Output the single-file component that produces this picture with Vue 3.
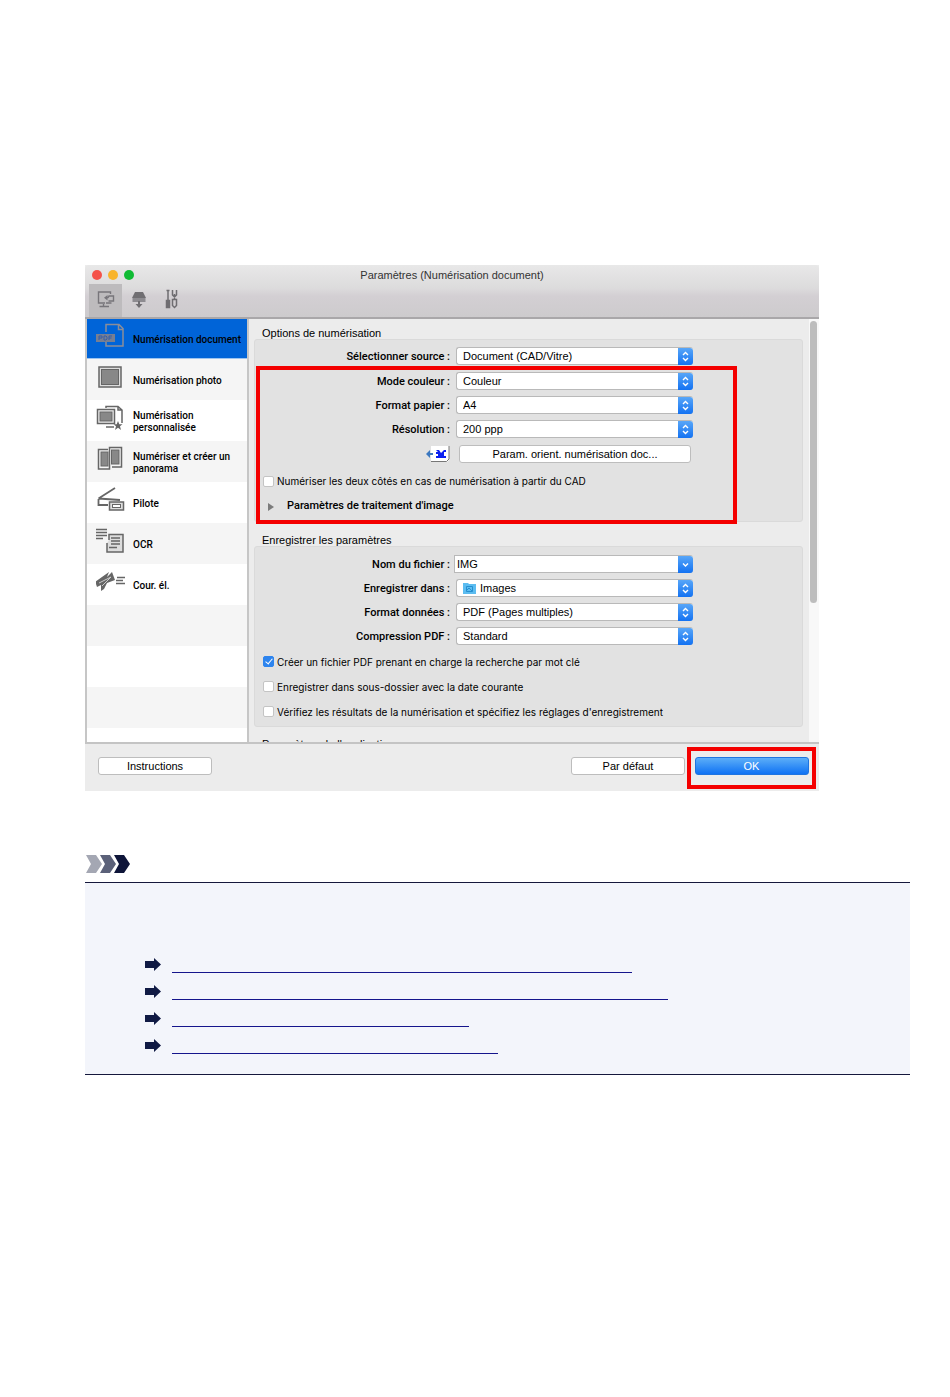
<template>
  <main class="page">
    <section class="window">
      <header class="titlebar">
        <div class="caption">
          <div class="lights"><i class="red"></i><i class="amber"></i><i class="green"></i></div>
          <h1>Paramètres (Numérisation document)</h1>
          <div class="lights-space"></div>
        </div>
        <nav class="toolbar">
          <button class="tool active" aria-label="Numériser depuis un ordinateur">
            <svg width="20" height="20" viewBox="0 0 20 20" fill="none" stroke="#77757a" stroke-width="1.4">
              <path d="M9 14H2.500V3H14.500V5M3.500 17.500H13M7.500 15V17" />
              <path d="M10 14H15.500M10 8.500H12L13 7H17.500V12H12.500" />
              <path d="M11.500 6L8 8.700L11.500 11.500Z" fill="#77757a" stroke="none" />
            </svg>
          </button>
          <button class="tool" aria-label="Numériser depuis le panneau">
            <svg width="20" height="20" viewBox="0 0 20 20" fill="#706e72">
              <path d="M6 3H14L17 9H3Z" />
              <path d="M3.500 9H16.500V13H3.500Z" fill="#8d8b90" />
              <path d="M9 12H11V15H13.500L10 19L6.500 15H9Z" />
            </svg>
          </button>
          <button class="tool" aria-label="Paramètres généraux">
            <svg width="20" height="20" viewBox="0 0 20 20" fill="none" stroke="#6f6d71" stroke-width="1.5">
              <path d="M6 1V11M4.500 1.500H7.500" />
              <rect x="4.500" y="11.500" width="3" height="7" fill="#6f6d71" />
              <path d="M10.500 1V6L12.500 8L14.500 6V1M12.500 5V10" />
              <path d="M10.500 10.500H14.500V16.500L12.500 18.500L10.500 16.500Z" />
            </svg>
          </button>
        </nav>
      </header>

      <div class="body">
        <ul class="sidebar">
          <li v-for="item in menu" :key="item.label" :class="{ selected: item.icon === 'doc' }">
            <button class="item">
              <svg width="32" height="28" viewBox="0 0 32 28" fill="none" stroke="#666" stroke-width="1.5">
                <g v-if="item.icon === 'doc'" stroke="#8b8d98">
                  <path d="M10 10V2.500H23L27 6.500V24H10V20M22.500 3V7.500H27" />
                  <rect x="0" y="12" width="19" height="8" fill="#777f92" stroke="none" />
                  <path d="M3 18V14H6V16H3M8 14V18H10L11 17V15L10 14ZM13 18V14H16M13 16H15.500" stroke="#365fa8" stroke-width="1" />
                </g>
                <g v-else-if="item.icon === 'photo'">
                  <rect x="3" y="4" width="22" height="20" fill="#ddd" />
                  <rect x="5.500" y="6.500" width="17" height="15" fill="#888" stroke-width="1" />
                </g>
                <g v-else-if="item.icon === 'custom'">
                  <path d="M10 4V2.500H22L26 6V19M22 3V6H26" />
                  <rect x="1.500" y="5.500" width="17" height="14" fill="#eee" />
                  <rect x="4" y="8" width="12" height="9" fill="#888" stroke-width="1" />
                  <path d="M10 23H18" />
                  <path d="M22 17L23.300 20.200H26.500L24 22.300L25 26L22 23.800L19 26L20 22.300L17.500 20.200H20.700Z" fill="#666" stroke="none" />
                </g>
                <g v-else-if="item.icon === 'pano'">
                  <path d="M12 4.500H2.500V24H13.500V2.500H25.500V22H16" />
                  <rect x="5" y="7" width="7" height="14" fill="#888" stroke-width="1" />
                  <rect x="15.500" y="5" width="7.500" height="14" fill="#888" stroke-width="1" />
                </g>
                <g v-else-if="item.icon === 'pilot'">
                  <path d="M2.500 12.500L19 2M2.500 12.500L24 14M2.500 13V19H12" stroke-width="1.800" />
                  <rect x="13.500" y="16" width="14" height="8" fill="#ddd" />
                  <rect x="16.500" y="18.500" width="8" height="3" fill="#fff" stroke-width="1" />
                </g>
                <g v-else-if="item.icon === 'ocr'">
                  <path d="M0 2.500H11M0 5.500H11M0 8.500H11M0 11.500H7" />
                  <path d="M11 16V25H27V7.500H13V13" fill="#ddd" />
                  <path d="M15 11H24M15 14H24M15 17H24M13 20.500H21" />
                </g>
                <g v-else>
                  <path d="M-1 14L13 4L11 9L16 4L19 12L11 15L8 21L5 23L5 17L1 19L0 16Z" fill="#666" stroke="none" />
                  <path d="M3 15L15 9L6 18" stroke="#ccc" stroke-width="1" />
                  <path d="M21 9.500H29M20 12.500H27M20 15.500H29" />
                </g>
              </svg>
              <span>{{ item.label }}</span>
            </button>
          </li>
          <li v-for="n in 4" :key="n"></li>
        </ul>

        <div class="content">
          <div class="panels">
            <h2>Options de numérisation</h2>
            <div class="group scan">
              <div class="row first">
                <label for="source">Sélectionner source :</label>
                <div class="combo">
                  <select id="source"><option>Document (CAD/Vitre)</option></select>
                  <svg class="knob" width="15" height="17" viewBox="0 0 15 17"><path d="M5 7L7.500 4.500L10 7M5 10L7.500 12.500L10 10" /></svg>
                </div>
              </div>
              <div class="highlight">
                <div v-for="f in scanFields" :key="f.id" class="row">
                  <label :for="f.id">{{ f.label }}</label>
                  <div class="combo">
                    <select :id="f.id"><option>{{ f.value }}</option></select>
                    <svg class="knob" width="15" height="17" viewBox="0 0 15 17"><path d="M5 7L7.500 4.500L10 7M5 10L7.500 12.500L10 10" /></svg>
                  </div>
                </div>
                <div class="row orient">
                  <svg class="orient-icon" width="24" height="18" viewBox="0 0 24 18">
                    <path d="M5 1H23V15L21 17H5Z" fill="#fff" />
                    <path d="M23 1V14L20.500 16.500H5" fill="none" stroke="#777" />
                    <path d="M0 9L4 5V8H7V10H4V13Z" fill="#3c78c0" />
                    <path d="M10 5H13L15 8L18 5H20V7H18V11H20V13H10V11H12V9H10V7H12Z" fill="#0b20f0" />
                  </svg>
                  <button class="push">Param. orient. numérisation doc...</button>
                </div>
                <label class="check both"><input type="checkbox" />Numériser les deux côtés en cas de numérisation à partir du CAD</label>
                <button class="disclosure">
                  <svg width="6" height="8" viewBox="0 0 6 8"><path d="M0 0L6 4L0 8Z" fill="#7b7b7b" /></svg>
                  Paramètres de traitement d'image
                </button>
              </div>
            </div>

            <h2>Enregistrer les paramètres</h2>
            <div class="group save">
              <div class="row">
                <label for="name">Nom du fichier :</label>
                <div class="combo text">
                  <input id="name" type="text" value="IMG" />
                  <svg class="knob" width="15" height="17" viewBox="0 0 15 17"><path d="M5 7.500L7.500 10L10 7.500" /></svg>
                </div>
              </div>
              <div v-for="f in saveFields" :key="f.id" class="row">
                <label :for="f.id">{{ f.label }}</label>
                <div class="combo" :class="{ folder: f.id === 'folder' }">
                  <svg v-if="f.id === 'folder'" class="folder-icon" width="13" height="12" viewBox="0 0 13 12">
                    <path d="M0 1H5L6 2H13V12H0Z" fill="#5cbcf0" />
                    <path d="M3.500 9.500V4.500H9.500V9.500ZM4 8L6 6L9 9" fill="none" stroke="#258fd0" />
                  </svg>
                  <select :id="f.id"><option>{{ f.value }}</option></select>
                  <svg class="knob" width="15" height="17" viewBox="0 0 15 17"><path d="M5 7L7.500 4.500L10 7M5 10L7.500 12.500L10 10" /></svg>
                </div>
              </div>
              <div class="checks">
                <label v-for="c in checks" :key="c.label" class="check"><input type="checkbox" v-model="c.on" />{{ c.label }}</label>
              </div>
            </div>

            <h2>Paramètres de l'application</h2>
          </div>
          <div class="track"><div class="thumb"></div></div>
        </div>
      </div>

      <footer class="footer">
        <button class="push">Instructions</button>
        <button class="push default">Par défaut</button>
        <div class="ok"><button class="push primary">OK</button></div>
      </footer>
    </section>

    <svg class="chevrons" width="46" height="18" viewBox="0 0 46 18">
      <path d="M1 0H11L17 9L11 18H1L6 9Z" fill="#a4a7b3" />
      <path d="M15 0H25L31 9L25 18H15L20 9Z" fill="#5b6179" />
      <path d="M29 0H39L45 9L39 18H29L34 9Z" fill="#0e1539" />
    </svg>
    <section class="note">
      <ul>
        <li v-for="(w, i) in links" :key="i">
          <svg width="16" height="13" viewBox="0 0 16 13"><path d="M0 3H9V0L16 6.500L9 13V10H0Z" fill="#101a44" /></svg>
          <a href="#" :aria-label="'Lien ' + (i + 1)" :style="{ width: w + '%' }"></a>
        </li>
      </ul>
    </section>
  </main>
</template>

<script setup>
import { reactive } from "vue";

const menu = [
  { icon: "doc", label: "Numérisation document" },
  { icon: "photo", label: "Numérisation photo" },
  { icon: "custom", label: "Numérisation personnalisée" },
  { icon: "pano", label: "Numériser et créer un panorama" },
  { icon: "pilot", label: "Pilote" },
  { icon: "ocr", label: "OCR" },
  { icon: "mail", label: "Cour. él." },
];

const scanFields = [
  { id: "color", label: "Mode couleur :", value: "Couleur" },
  { id: "paper", label: "Format papier :", value: "A4" },
  { id: "dpi", label: "Résolution :", value: "200 ppp" },
];

const saveFields = [
  { id: "folder", label: "Enregistrer dans :", value: "Images" },
  { id: "format", label: "Format données :", value: "PDF (Pages multiples)" },
  { id: "pdf", label: "Compression PDF :", value: "Standard" },
];

const checks = reactive([
  { label: "Créer un fichier PDF prenant en charge la recherche par mot clé", on: true },
  { label: "Enregistrer dans sous-dossier avec la date courante", on: false },
  { label: "Vérifiez les résultats de la numérisation et spécifiez les réglages d'enregistrement", on: false },
]);

// link widths, in percent of the list
const links = [65, 70, 42, 46];
</script>

<style>
body {
  margin: 0;
  background: #fff;
}
</style>

<style scoped>
* {
  box-sizing: border-box;
  font-family: "Liberation Sans", Arial, sans-serif;
}

.page {
  padding: 265px 40px 40px 85px;
  font-size: 11px;
  color: #000;
}

h1,
h2,
ul {
  margin: 0;
  padding: 0;
  font-weight: 400;
  list-style: none;
}

button {
  border: none;
  padding: 0;
  background: none;
  color: inherit;
  font-size: 11px;
}

.window {
  margin-right: 91px;
  background: #ececec;
}

.titlebar {
  height: 54px;
  border-bottom: 2px solid #a9a7a9;
  border-radius: 4px 4px 0 0;
  background: linear-gradient(#e8e8e8, #dcdbdc 45%, #d3cfd3 60%, #cdcbcd);
}

.caption {
  display: flex;
  align-items: center;
  justify-content: space-between;
  height: 19px;
}

.lights,
.lights-space {
  display: flex;
  gap: 6px;
  width: 52px;
  padding-left: 7px;
}

.lights i {
  width: 10px;
  height: 10px;
  border-radius: 50%;
}

.red {
  background: #f4524a;
}

.amber {
  background: #f8b42c;
}

.green {
  background: #10bb34;
}

h1 {
  font-size: 11px;
  color: #333;
}

.toolbar {
  display: flex;
  padding-left: 4px;
}

.tool {
  display: flex;
  align-items: center;
  justify-content: center;
  width: 33px;
  height: 33px;
}

.tool svg {
  margin-bottom: 4px;
}

.tool.active {
  background: #bdbbbd;
}

.body {
  display: flex;
  height: 425px;
  border-bottom: 2px solid #c4c4c4;
}

.sidebar {
  flex: none;
  width: 164px;
  overflow: hidden;
  border: solid #c6c6c6;
  border-width: 0 2px;
  background: #fff;
}

.sidebar li {
  height: 41px;
}

.sidebar li:nth-child(even) {
  background: #f5f5f5;
}

.sidebar .selected {
  height: 40px;
  background: #0064d8;
  border-bottom: 1px solid #9cc4f0;
}

.item {
  display: flex;
  align-items: center;
  gap: 5px;
  width: 100%;
  height: 100%;
  padding-left: 9px;
  font-size: 10px;
  line-height: 12px;
  text-align: left;
}

.item svg {
  flex: none;
  margin-bottom: 6px;
}

.item span {
  padding-top: 2px;
  font-family: Roboto, sans-serif;
  font-weight: 500;
}

.content {
  display: flex;
  flex: 1;
  overflow: hidden;
}

.panels {
  flex: 1;
  padding: 6px 6px 0 5px;
}

h2 {
  height: 14px;
  padding-left: 8px;
  font-size: 11px;
  line-height: 16px;
}

.group {
  border: 1px solid #dadada;
  border-radius: 3px;
  background: #e2e2e2;
}

.scan {
  height: 183px;
  margin-bottom: 10px;
  padding-top: 4px;
}

.save {
  height: 181px;
  margin-bottom: 9px;
  padding-top: 5px;
}

.row {
  display: flex;
  align-items: center;
  gap: 6px;
  height: 24px;
}

.row.first {
  margin-bottom: 1px;
}

.row label {
  width: 195px;
  text-align: right;
}

.row label,
.disclosure {
  font-family: Roboto, sans-serif;
  font-weight: 500;
}

.combo {
  display: flex;
  align-items: center;
  width: 237px;
  height: 18px;
  border: 1px solid #b9b9b9;
  border-right: none;
  border-radius: 3px;
  background: #fff;
}

.combo select,
.combo input {
  flex: 1;
  min-width: 0;
  height: 16px;
  padding: 0 0 0 6px;
  border: none;
  outline: none;
  appearance: none;
  background: none;
  font-size: 11px;
  color: #000;
}

.combo.text {
  width: 239px;
  margin-left: -2px;
  border-radius: 0 3px 3px 0;
}

.combo input {
  padding-left: 2px;
}

.folder-icon {
  flex: none;
  margin-left: 6px;
}

.combo.folder select {
  padding-left: 4px;
}

.knob {
  flex: none;
  border-radius: 0 3px 3px 0;
  background: linear-gradient(#58a6f8, #1372f2);
  fill: none;
  stroke: #fff;
  stroke-width: 1.4;
}

.highlight {
  position: relative;
}

.highlight::after {
  content: "";
  position: absolute;
  top: -3px;
  left: 1px;
  box-sizing: border-box;
  width: 481px;
  height: 158px;
  border: 4px solid #f40000;
  pointer-events: none;
}

.orient {
  height: 26px;
  gap: 9px;
  padding-left: 171px;
}

.push {
  height: 18px;
  border: 1px solid #bdbdbd;
  border-radius: 3px;
  background: #fff;
}

.orient .push {
  width: 232px;
}

.check {
  display: flex;
  align-items: center;
  gap: 3px;
  height: 25px;
  padding-left: 8px;
  font-family: Inter, sans-serif;
  font-size: 10px;
}

.check.both {
  height: 28px;
}

.check input {
  display: grid;
  place-items: center;
  width: 11px;
  height: 11px;
  margin: 0;
  border: 1px solid #c4c4c4;
  border-radius: 2px;
  appearance: none;
  background: #fff;
}

.check input:checked {
  border-color: #2d84ee;
  background: #2d84ee;
}

.check input:checked::before {
  content: "";
  width: 3px;
  height: 6px;
  margin-bottom: 2px;
  border: solid #fff;
  border-width: 0 1px 1px 0;
  transform: rotate(40deg);
}

.checks {
  padding-top: 1px;
}

.disclosure {
  display: flex;
  align-items: center;
  gap: 13px;
  height: 20px;
  padding-left: 13px;
}

.disclosure svg {
  margin-top: 4px;
}

.track {
  width: 10px;
  padding: 2px 1px;
  background: #f8f8f8;
}

.thumb {
  width: 7px;
  height: 282px;
  border-radius: 4px;
  background: #bdbdbd;
}

.footer {
  display: flex;
  align-items: center;
  height: 47px;
  padding: 0 3px 3px 13px;
}

.footer .push {
  width: 114px;
}

.footer .default {
  margin-left: auto;
}

.ok {
  display: flex;
  align-items: center;
  justify-content: center;
  width: 129px;
  height: 42px;
  margin: 4px 0 0 2px;
  border: 4px solid #f40000;
}

.ok .primary {
  margin-bottom: 4px;
  border-color: #1f74e0;
  background: linear-gradient(#5caef8, #0f72f4);
  color: #fff;
}

.chevrons {
  display: block;
  margin-top: 64px;
}

.note {
  height: 193px;
  margin-top: 9px;
  padding: 73px 0 0 60px;
  border: solid #15183c;
  border-width: 1px 0;
  background: #f3f5fb;
}

.note ul {
  margin-right: 57px;
}

.note li {
  display: flex;
  align-items: center;
  gap: 11px;
  height: 27px;
}

.note li svg {
  flex: none;
  margin-bottom: 10px;
}

.note a {
  height: 7px;
  border-bottom: 1px solid #15158c;
}
</style>
